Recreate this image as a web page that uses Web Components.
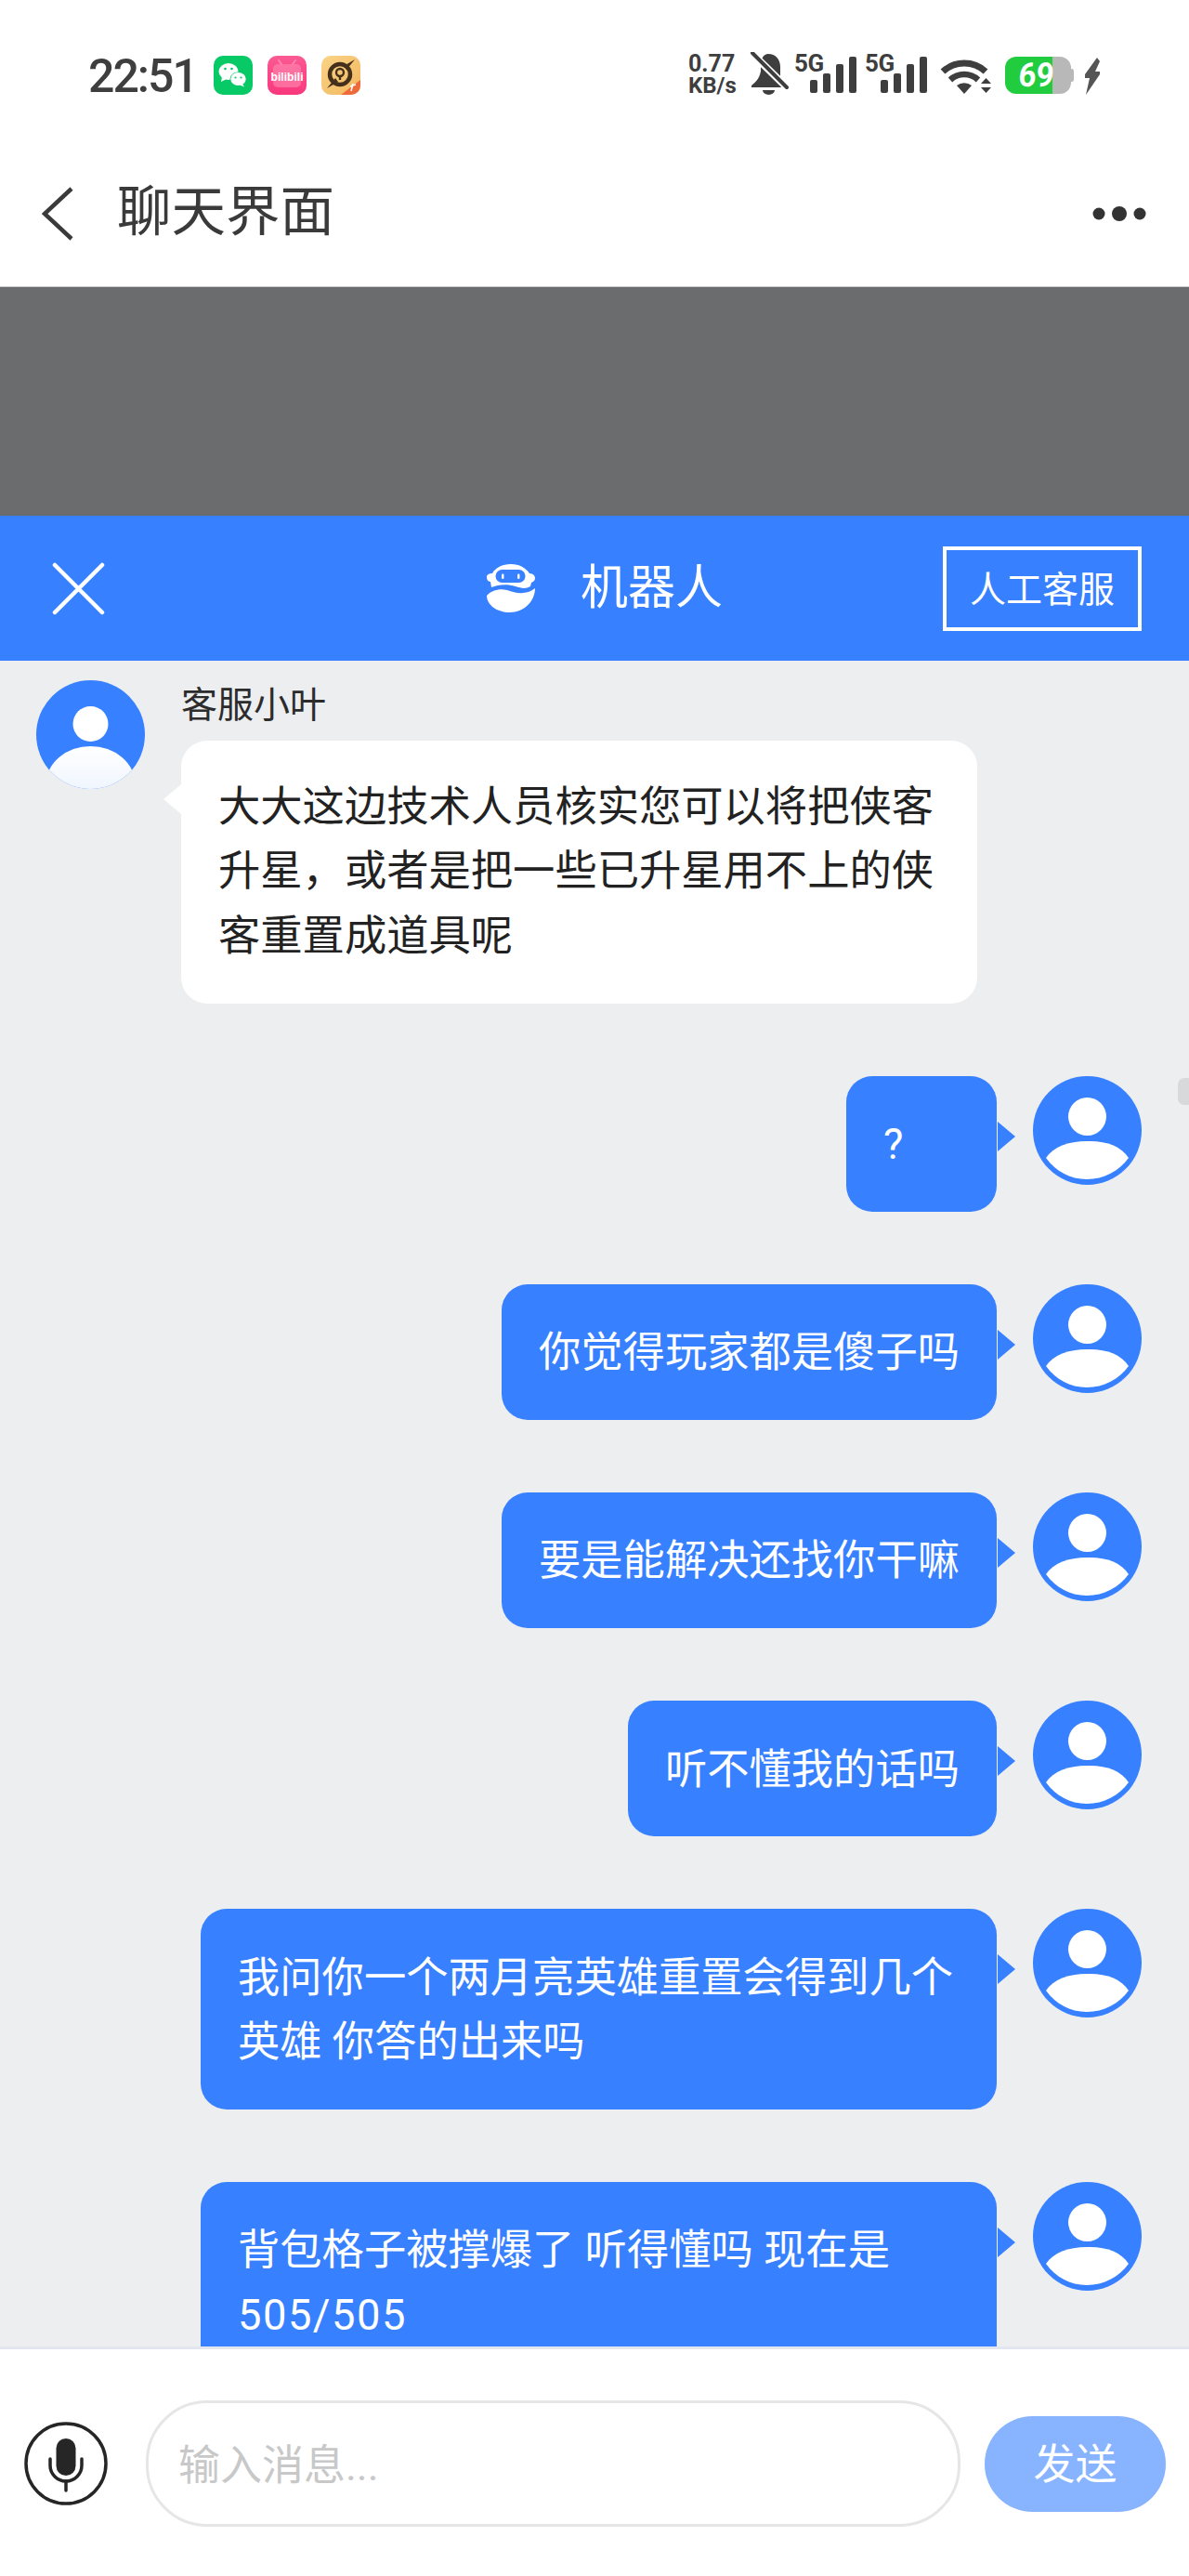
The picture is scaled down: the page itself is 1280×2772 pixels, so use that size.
<!DOCTYPE html>
<html lang="zh">
<head>
<meta charset="utf-8">
<title>聊天界面</title>
<style>
  html, body { margin: 0; padding: 0; background: #fff; }
  body {
    width: 1280px;
    height: 2772px;
    overflow: hidden;
    font-family: Roboto, "Noto Sans CJK SC", sans-serif;
  }
</style>
</head>
<body>
  <status-bar></status-bar>
  <nav-bar>聊天界面</nav-bar>
  <gray-strip></gray-strip>
  <chat-header></chat-header>
  <chat-list>
    <chat-msg side="bot" name="客服小叶">大大这边技术人员核实您可以将把侠客升星，或者是把一些已升星用不上的侠客重置成道具呢</chat-msg>
    <chat-msg side="me">?</chat-msg>
    <chat-msg side="me">你觉得玩家都是傻子吗</chat-msg>
    <chat-msg side="me">要是能解决还找你干嘛</chat-msg>
    <chat-msg side="me">听不懂我的话吗</chat-msg>
    <chat-msg side="me">我问你一个两月亮英雄重置会得到几个英雄 你答的出来吗</chat-msg>
    <chat-msg side="me">背包格子被撑爆了 听得懂吗 现在是<span style="letter-spacing:1.5px">505/505</span></chat-msg>
  </chat-list>
  <chat-input></chat-input>

<script>
// status bar at the very top
class StatusBar extends HTMLElement {
  constructor() {
    super();
    const root = this.attachShadow({mode: 'open'});
    root.innerHTML = `
      <style>
        :host {
          display: flex;
          align-items: flex-start;
          box-sizing: border-box;
          height: 160px;
          padding: 55px 0 0 95px;
          color: #3e3e3e;
          font-family: Roboto, "Noto Sans CJK SC", sans-serif;
        }
        .time { font-size: 50px; font-weight: 500; line-height: 50px; margin-top: 2px; letter-spacing: -2px; width: 135px; }
        svg { display: block; flex: none; }
        .apps { display: flex; gap: 16px; margin-top: 5px; }
        .speed { margin-left: 353px; font-weight: 700; font-size: 25px; line-height: 27px; width: 65px; }
        .speed div:last-child { font-size: 24px; line-height: 20px; }
        .cluster { display: flex; align-items: flex-start; }
      </style>
      <div class="time">22:51</div>
      <div class="apps">
        <svg width="42" height="42" viewBox="0 0 42 42">
          <rect width="42" height="42" rx="10" fill="#07c966"/>
          <ellipse cx="16" cy="17" rx="10.500" ry="9" fill="#fff"/>
          <path d="M9 23l-1 5 6-3z" fill="#fff"/>
          <ellipse cx="26.500" cy="25" rx="9" ry="7.600" fill="#07c966"/>
          <ellipse cx="26.500" cy="25" rx="8.200" ry="7" fill="#fff"/>
          <path d="M31 30l2 3.500-5-2z" fill="#fff"/>
          <circle cx="12.500" cy="14" r="1.300" fill="#07c966"/><circle cx="19.500" cy="14" r="1.300" fill="#07c966"/>
          <circle cx="23.500" cy="23.500" r="1.100" fill="#07c966"/><circle cx="29.500" cy="23.500" r="1.100" fill="#07c966"/>
        </svg>
        <svg width="42" height="42" viewBox="0 0 42 42">
          <defs><linearGradient id="bl" x1="0" y1="0" x2="0" y2="1"><stop offset="0" stop-color="#fb5a93"/><stop offset="1" stop-color="#f9377c"/></linearGradient></defs>
          <rect width="42" height="42" rx="10" fill="url(#bl)"/>
          <rect x="6" y="9" width="30" height="25" rx="5" fill="#ff86ae" opacity=".65"/>
          <path d="M15 9l-3-4M27 9l3-4" stroke="#ff86ae" stroke-width="2" stroke-linecap="round"/>
          <text x="21" y="27" text-anchor="middle" font-family="'Liberation Sans', sans-serif" font-size="13.500" font-weight="700" fill="#fff" textLength="35" lengthAdjust="spacingAndGlyphs">bilibili</text>
        </svg>
        <svg width="42" height="42" viewBox="0 0 42 42">
          <defs><linearGradient id="gm" x1="0" y1="0" x2="1" y2="1"><stop offset="0" stop-color="#fad487"/><stop offset="1" stop-color="#f2b75e"/></linearGradient></defs>
          <rect width="42" height="42" rx="10" fill="url(#gm)"/>
          <circle cx="20" cy="20" r="11" fill="none" stroke="#45301c" stroke-width="4.500"/>
          <path d="M36 4L27 15 24 11zM6 35l9-11 3 4z" fill="#45301c"/>
          <circle cx="20" cy="18" r="4" fill="none" stroke="#45301c" stroke-width="2.400"/>
          <path d="M20 21v5" stroke="#45301c" stroke-width="2.400"/>
          <path d="M42 26v6a10 10 0 0 1-10 10H21z" fill="#ee6a3a"/>
          <path d="M31 33l6-2M34 30l-2 8" stroke="#fff" stroke-width="1.500" fill="none"/>
        </svg>
      </div>
      <div class="speed"><div>0.77</div><div>KB/s</div></div>
      <div class="cluster">
        <svg width="43" height="47" viewBox="0 0 43 47" style="margin-top:1px">
          <path d="M21 2c8 0 13 6 13 14v15l6 5v2H3v-2c5-4 8-7 10-15V15c0-8 3-13 8-13z" fill="#3e3e3e"/>
          <path d="M15 41h13a6.500 5 0 0 1-13 0z" fill="#3e3e3e"/>
          <path d="M1 -1L43 40" stroke="#fff" stroke-width="8"/>
          <path d="M4 1L41 38" stroke="#3e3e3e" stroke-width="4" stroke-linecap="round"/>
        </svg>
        <signal-icon style="margin-left:6px"></signal-icon>
        <signal-icon style="margin-left:9px"></signal-icon>
        <svg width="56" height="40" viewBox="0 0 56 40" style="margin:7px 0 0 14px">
          <path d="M3 15a34 34 0 0 1 46 0" fill="none" stroke="#3e3e3e" stroke-width="7"/>
          <path d="M11 24a22 22 0 0 1 30 0" fill="none" stroke="#3e3e3e" stroke-width="6.500"/>
          <path d="M18 30a13 13 0 0 1 16 0l-8 9z" fill="#3e3e3e"/>
          <path d="M44 28h11l-5.500-6zM44 32h11l-5.500 6z" fill="#3e3e3e"/>
        </svg>
        <svg width="78" height="42" viewBox="0 0 78 42" style="margin:5px 0 0 13px">
          <rect x="70" y="14" width="5" height="14" rx="2.500" fill="#b8b8b8"/>
          <path d="M50 1h10a12 12 0 0 1 12 12v16a12 12 0 0 1-12 12H50z" fill="#b8b8b8"/>
          <path d="M13 1h39v40H13A12 12 0 0 1 1 29V13A12 12 0 0 1 13 1z" fill="#22cc3f"/>
          <text x="17" y="33" font-family="Roboto, sans-serif" font-size="36" font-weight="700" fill="#fff" textLength="38" lengthAdjust="spacingAndGlyphs" transform="skewX(-4)">69</text>
        </svg>
        <svg width="20" height="40" viewBox="0 0 20 40" style="margin:7px 0 0 7px">
          <path d="M15 0L2 18l0 4h5L3 40l15-22 0-3h-5l5-11z" fill="#555"/>
        </svg>
      </div>
    `;
  }
}

class SignalIcon extends HTMLElement {
  constructor() {
    super();
    const root = this.attachShadow({mode: 'open'});
    root.innerHTML = `
      <style>
        :host { display: grid; width: 67px; height: 46px; font-family: Roboto, sans-serif; }
        :host > * { grid-area: 1 / 1; }
        svg { display: block; }
        .net { font-size: 26px; font-weight: 700; line-height: 26px; color: #3e3e3e; letter-spacing: -0.5px; }
      </style>
      <svg width="67" height="46" viewBox="0 0 67 46">
        <rect x="17" y="31" width="8" height="14" rx="2" fill="#3e3e3e"/>
        <rect x="31" y="24" width="8" height="21" rx="2" fill="#3e3e3e"/>
        <rect x="45" y="14" width="8" height="31" rx="2" fill="#3e3e3e"/>
        <rect x="59" y="6" width="8" height="39" rx="2" fill="#3e3e3e"/>
      </svg>
      <div class="net">5G</div>
    `;
  }
}

class NavBar extends HTMLElement {
  constructor() {
    super();
    const root = this.attachShadow({mode: 'open'});
    root.innerHTML = `
      <style>
        :host {
          display: flex;
          align-items: center;
          box-sizing: border-box;
          height: 149px;
          padding: 0 46px 9px 45px;
          background: #fff;
          border-bottom: 1px solid #c9c9c9;
          color: #3a3a3a;
          font-size: 58.500px;
          font-family: Roboto, "Noto Sans CJK SC", sans-serif;
        }
        .title { margin: -3px 0 0 47px; flex: 1; line-height: 60px; }
        svg { display: block; }
      </style>
      <svg width="34" height="58" viewBox="0 0 34 58"><path d="M32 2L3 29l29 27" fill="none" stroke="#3a3a3a" stroke-width="4.500"/></svg>
      <div class="title"><slot></slot></div>
      <svg width="58" height="18" viewBox="0 0 58 18">
        <circle cx="7" cy="9" r="6.500" fill="#333"/><circle cx="29" cy="9" r="8" fill="#333"/><circle cx="51" cy="9" r="6.500" fill="#333"/>
      </svg>
    `;
  }
}

class GrayStrip extends HTMLElement {
  constructor() {
    super();
    const root = this.attachShadow({mode: 'open'});
    root.innerHTML = `<style>:host { display: block; height: 246px; background: #6b6c6e; }</style>`;
  }
}

class ChatHeader extends HTMLElement {
  constructor() {
    super();
    const root = this.attachShadow({mode: 'open'});
    root.innerHTML = `
      <style>
        :host {
          display: flex;
          align-items: center;
          box-sizing: border-box;
          height: 156px;
          padding: 0 51px 0 56px;
          background: #3780ff;
          color: #fff;
          font-family: Roboto, "Noto Sans CJK SC", sans-serif;
        }
        svg { display: block; flex: none; }
        .center { display: flex; align-items: center; margin-left: 411px; flex: 1; }
        .name { font-size: 51px; line-height: 60px; margin-left: 49px; }
        .btn {
          box-sizing: border-box;
          width: 214px;
          height: 91px;
          padding-bottom: 4px;
          border: 4px solid #fff;
          display: flex;
          align-items: center;
          justify-content: center;
          font-size: 39px;
        }
      </style>
      <svg width="57" height="57" viewBox="0 0 57 57">
        <path d="M3 3l51 51M54 3L3 54" stroke="#fff" stroke-width="4.500" stroke-linecap="round"/>
      </svg>
      <div class="center">
        <svg width="52" height="52" viewBox="0 0 52 52">
          <path d="M26 0C35 0 42 4 46 10C50 10 52 13 52 15C52 18 50 19 48 20L47 24C42 27 37 26 31 24C22 21 12 22 5 25L4 19C1 19 0 16 0 14C0 11 3 10 6 10C9 4 17 0 26 0Z" fill="#fff"/>
          <path d="M0 34C5 28 14 26 22 28C32 32 44 33 52 26C52 40 40 52 25 52C11 52 0 44 0 34Z" fill="#fff"/>
          <rect x="9.500" y="6" width="32" height="14" rx="7" fill="#3780ff"/>
          <rect x="16" y="10.500" width="2.500" height="5.500" rx="1.200" fill="#fff"/>
          <rect x="33" y="10.500" width="2.500" height="5.500" rx="1.200" fill="#fff"/>
        </svg>
        <div class="name">机器人</div>
      </div>
      <div class="btn">人工客服</div>
    `;
  }
}

class ChatList extends HTMLElement {
  constructor() {
    super();
    const root = this.attachShadow({mode: 'open'});
    root.innerHTML = `
      <style>
        :host {
          display: flex;
          flex-direction: column;
          gap: 78px;
          box-sizing: border-box;
          position: relative;
          height: 1814px;
          padding: 21px 51px 0 39px;
          overflow: hidden;
          background: #eceef0;
        }
        .thumb {
          position: absolute;
          right: 0;
          top: 449px;
          width: 12px;
          height: 29px;
          background: #d8d9da;
          border-radius: 7px 0 0 7px;
        }
      </style>
      <slot></slot>
      <div class="thumb"></div>
    `;
  }
}

const avatarBot = `
  <svg width="117" height="117" viewBox="0 0 117 117">
    <defs>
      <clipPath id="c"><circle cx="58.500" cy="58.500" r="58.500"/></clipPath>
      <linearGradient id="b" x1="0" y1="0" x2="0" y2="1"><stop offset="0" stop-color="#fff"/><stop offset="1" stop-color="#e4eeff"/></linearGradient>
    </defs>
    <circle cx="58.500" cy="58.500" r="58.500" fill="#3780ff"/>
    <circle cx="58.500" cy="47" r="19" fill="#fff"/>
    <g clip-path="url(#c)"><ellipse cx="58.500" cy="112" rx="48" ry="41" fill="url(#b)"/></g>
  </svg>`;

const avatarMe = `
  <svg width="117" height="117" viewBox="0 0 117 117">
    <circle cx="58.500" cy="58.500" r="58.500" fill="#3780ff"/>
    <circle cx="58.500" cy="43.500" r="20.500" fill="#fff"/>
    <path d="M14 88c8-12 24-18 44-18h3c20 0 34 6 42 18-10 14-27 23-45 23S24 102 14 88z" fill="#fff"/>
  </svg>`;

class ChatMsg extends HTMLElement {
  constructor() {
    super();
    const root = this.attachShadow({mode: 'open'});
    root.innerHTML = `
      <style>
        :host {
          display: flex;
          flex: none;
          align-items: flex-start;
          font-size: 45.300px;
          line-height: 69.500px;
          font-family: Roboto, "Noto Sans CJK SC", sans-serif;
        }
        :host([side="me"]) { flex-direction: row-reverse; }
        svg { display: block; flex: none; }
        .body { display: flex; flex-direction: column; align-items: flex-start; margin: 0 39px; }
        .name { font-size: 39px; line-height: 40px; color: #2c2c2c; margin: 7px 0 18px; }
        .bubble {
          position: relative;
          box-sizing: border-box;
          min-width: 162px;
          max-width: 857px;
          padding: 39.500px 40px 37.200px;
          border-radius: 28px;
        }
        :host([side="bot"]) .bubble { background: #fff; color: #222; width: 857px; padding: 36.500px 40px 37.500px; }
        :host([side="me"]) .bubble { background: #3780ff; color: #fff; }
        .bubble::after {
          content: "";
          position: absolute;
          top: 49px;
          border-top: 16px solid transparent;
          border-bottom: 16px solid transparent;
        }
        :host([side="me"]) .bubble::after { right: -20px; border-left: 19px solid #3780ff; }
        :host([side="bot"]) .bubble::after { left: -19px; top: 47px; border-right: 19px solid #fff; }
      </style>
      <div class="av"></div>
      <div class="body">
        <div class="name"></div>
        <div class="bubble"><slot></slot></div>
      </div>
    `;
  }

  connectedCallback() {
    var side = this.getAttribute('side');
    var name = this.shadowRoot.querySelector('.name');
    this.shadowRoot.querySelector('.av').innerHTML = side === 'bot' ? avatarBot : avatarMe;
    if (this.getAttribute('name')) {
      name.textContent = this.getAttribute('name');
    } else {
      name.remove();
    }
  }
}

class ChatInput extends HTMLElement {
  constructor() {
    super();
    const root = this.attachShadow({mode: 'open'});
    root.innerHTML = `
      <style>
        :host {
          display: flex;
          align-items: center;
          box-sizing: border-box;
          height: 247px;
          padding: 2px 25px 0 26px;
          background: #fff;
          border-top: 3px solid #e3e6ee;
          font-family: Roboto, "Noto Sans CJK SC", sans-serif;
        }
        svg { display: block; flex: none; }
        .box {
          box-sizing: border-box;
          width: 877px;
          height: 136px;
          margin-left: 41px;
          padding: 0 0 3px 32px;
          border: 3px solid #e6e6e6;
          border-radius: 66px;
          display: flex;
          align-items: center;
          font-size: 45px;
          color: #c8c8c8;
        }
        .send {
          box-sizing: border-box;
          width: 195px;
          height: 103px;
          margin-left: 26px;
          padding-bottom: 5px;
          border-radius: 52px;
          background: #87b3ff;
          color: #fff;
          font-size: 45px;
          display: flex;
          align-items: center;
          justify-content: center;
        }
      </style>
      <svg width="90" height="90" viewBox="0 0 90 90">
        <circle cx="45" cy="45" r="43" fill="none" stroke="#262626" stroke-width="3.500"/>
        <rect x="34.500" y="18" width="21" height="40" rx="10.500" fill="#262626"/>
        <path d="M28 40v7a17 17 0 0 0 34 0v-7" fill="none" stroke="#262626" stroke-width="3.500" stroke-linecap="round"/>
        <path d="M45 64v10" stroke="#262626" stroke-width="3.500" stroke-linecap="round"/>
      </svg>
      <div class="box">输入消息...</div>
      <div class="send">发送</div>
    `;
  }
}

customElements.define('signal-icon', SignalIcon);
customElements.define('status-bar', StatusBar);
customElements.define('nav-bar', NavBar);
customElements.define('gray-strip', GrayStrip);
customElements.define('chat-header', ChatHeader);
customElements.define('chat-list', ChatList);
customElements.define('chat-msg', ChatMsg);
customElements.define('chat-input', ChatInput);
</script>
</body>
</html>
